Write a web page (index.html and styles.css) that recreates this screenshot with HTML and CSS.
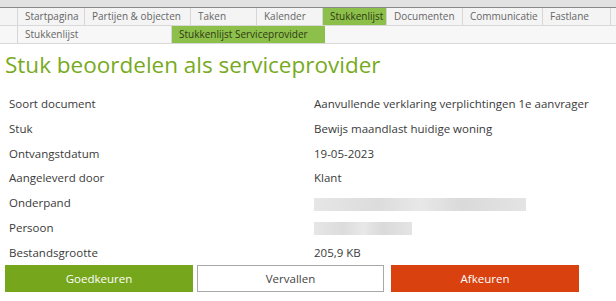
FILE: index.html
```
<!DOCTYPE html>
<html lang="nl">
<head>
    <meta charset="UTF-8">
    <link rel="stylesheet" href="styles.css">
    <title>Stuk beoordelen</title>
</head>
<body>
    <div class="topstrip"></div>
    <ul class="nav main">
        <li class="stub"></li>
        <li>Startpagina</li>
        <li>Partijen &amp; objecten</li>
        <li>Taken</li>
        <li>Kalender</li>
        <li class="active">Stukkenlijst</li>
        <li>Documenten</li>
        <li>Communicatie</li>
        <li>Fastlane</li>
        <li class="rest"></li>
    </ul>
    <ul class="nav sub">
        <li class="stub"></li>
        <li>Stukkenlijst</li>
        <li class="active">Stukkenlijst Serviceprovider</li>
        <li class="rest"></li>
    </ul>

    <h1>Stuk beoordelen als serviceprovider</h1>

    <div class="details">
        <div class="label">Soort document</div>
        <div class="value">Aanvullende verklaring verplichtingen 1e aanvrager</div>
        <div class="label">Stuk</div>
        <div class="value">Bewijs maandlast huidige woning</div>
        <div class="label">Ontvangstdatum</div>
        <div class="value">19-05-2023</div>
        <div class="label">Aangeleverd door</div>
        <div class="value">Klant</div>
        <div class="label">Onderpand</div>
        <div class="value"><span class="blur long"></span></div>
        <div class="label">Persoon</div>
        <div class="value"><span class="blur short"></span></div>
        <div class="label">Bestandsgrootte</div>
        <div class="value">205,9 KB</div>
    </div>

    <div class="actions">
        <button class="btn approve">Goedkeuren</button>
        <button class="btn expire">Vervallen</button>
        <button class="btn reject">Afkeuren</button>
    </div>
</body>
</html>
```
FILE: styles.css
```
body {
    margin: 0;
    font-family: "Open Sans", "Noto Sans", sans-serif;
    color: #3a3a3a;
    background: #fff;
}

.topstrip {
    height: 7px;
    background: #e2e2e2;
    border-bottom: 1px solid #8a8a8a;
}

.nav {
    display: flex;
    list-style: none;
    margin: 0;
    padding: 0;
    height: 17px;
    font-size: 10px;
    line-height: 17px;
    color: #666;
    background: #f4f4f4;
    border-bottom: 1px solid #d8d8d8;
    white-space: nowrap;
}

.nav li {
    box-sizing: border-box;
    flex: none;
    padding: 0 0 0 7px;
    border-right: 1px solid #d6d6d6;
    overflow: hidden;
}

.nav .stub {
    width: 18px;
}

.nav .rest {
    flex: 1;
    border-right: none;
}

.nav .active {
    background: #8dc04a;
    color: #2e3a14;
}

.main li:nth-child(2) { width: 67px; }
.main li:nth-child(3) { width: 106px; }
.main li:nth-child(4) { width: 66px; }
.main li:nth-child(5) { width: 66px; }
.main li:nth-child(6) { width: 64px; }
.main li:nth-child(7) { width: 76px; }
.main li:nth-child(8) { width: 80px; }
.main li:nth-child(9) { width: 68px; }

.sub {
    background: #f7f7f7;
}

.sub li:nth-child(2) { width: 154px; }
.sub li:nth-child(3) { width: 153px; border-right: none; }

h1 {
    margin: 6px 0 0 5px;
    font-size: 22.5px;
    font-weight: normal;
    color: #78aa1e;
    line-height: 30px;
}

.details {
    display: grid;
    grid-template-columns: 305px 1fr;
    padding: 12px 0 0 9px;
    font-size: 11.5px;
    line-height: 24.8px;
}

.blur {
    display: inline-block;
    height: 13px;
    vertical-align: middle;
    background: linear-gradient(90deg, #e6e6e6, #dcdcdc 30%, #e8e8e8 50%, #dadada 70%, #e4e4e4);
}

.blur.long { width: 212px; }
.blur.short { width: 98px; }

.actions {
    display: flex;
    gap: 4px;
    padding: 0 0 0 5px;
    margin-top: -1px;
}

.btn {
    width: 188px;
    height: 27px;
    border: 1px solid transparent;
    font-family: inherit;
    font-size: 11.5px;
    color: #fff;
}

.approve {
    background: #76a61b;
}

.expire {
    width: 187px;
    background: #fff;
    border-color: #a8a8a8;
    color: #444;
}

.reject {
    margin-left: 3px;
    background: #d9410f;
}
```
